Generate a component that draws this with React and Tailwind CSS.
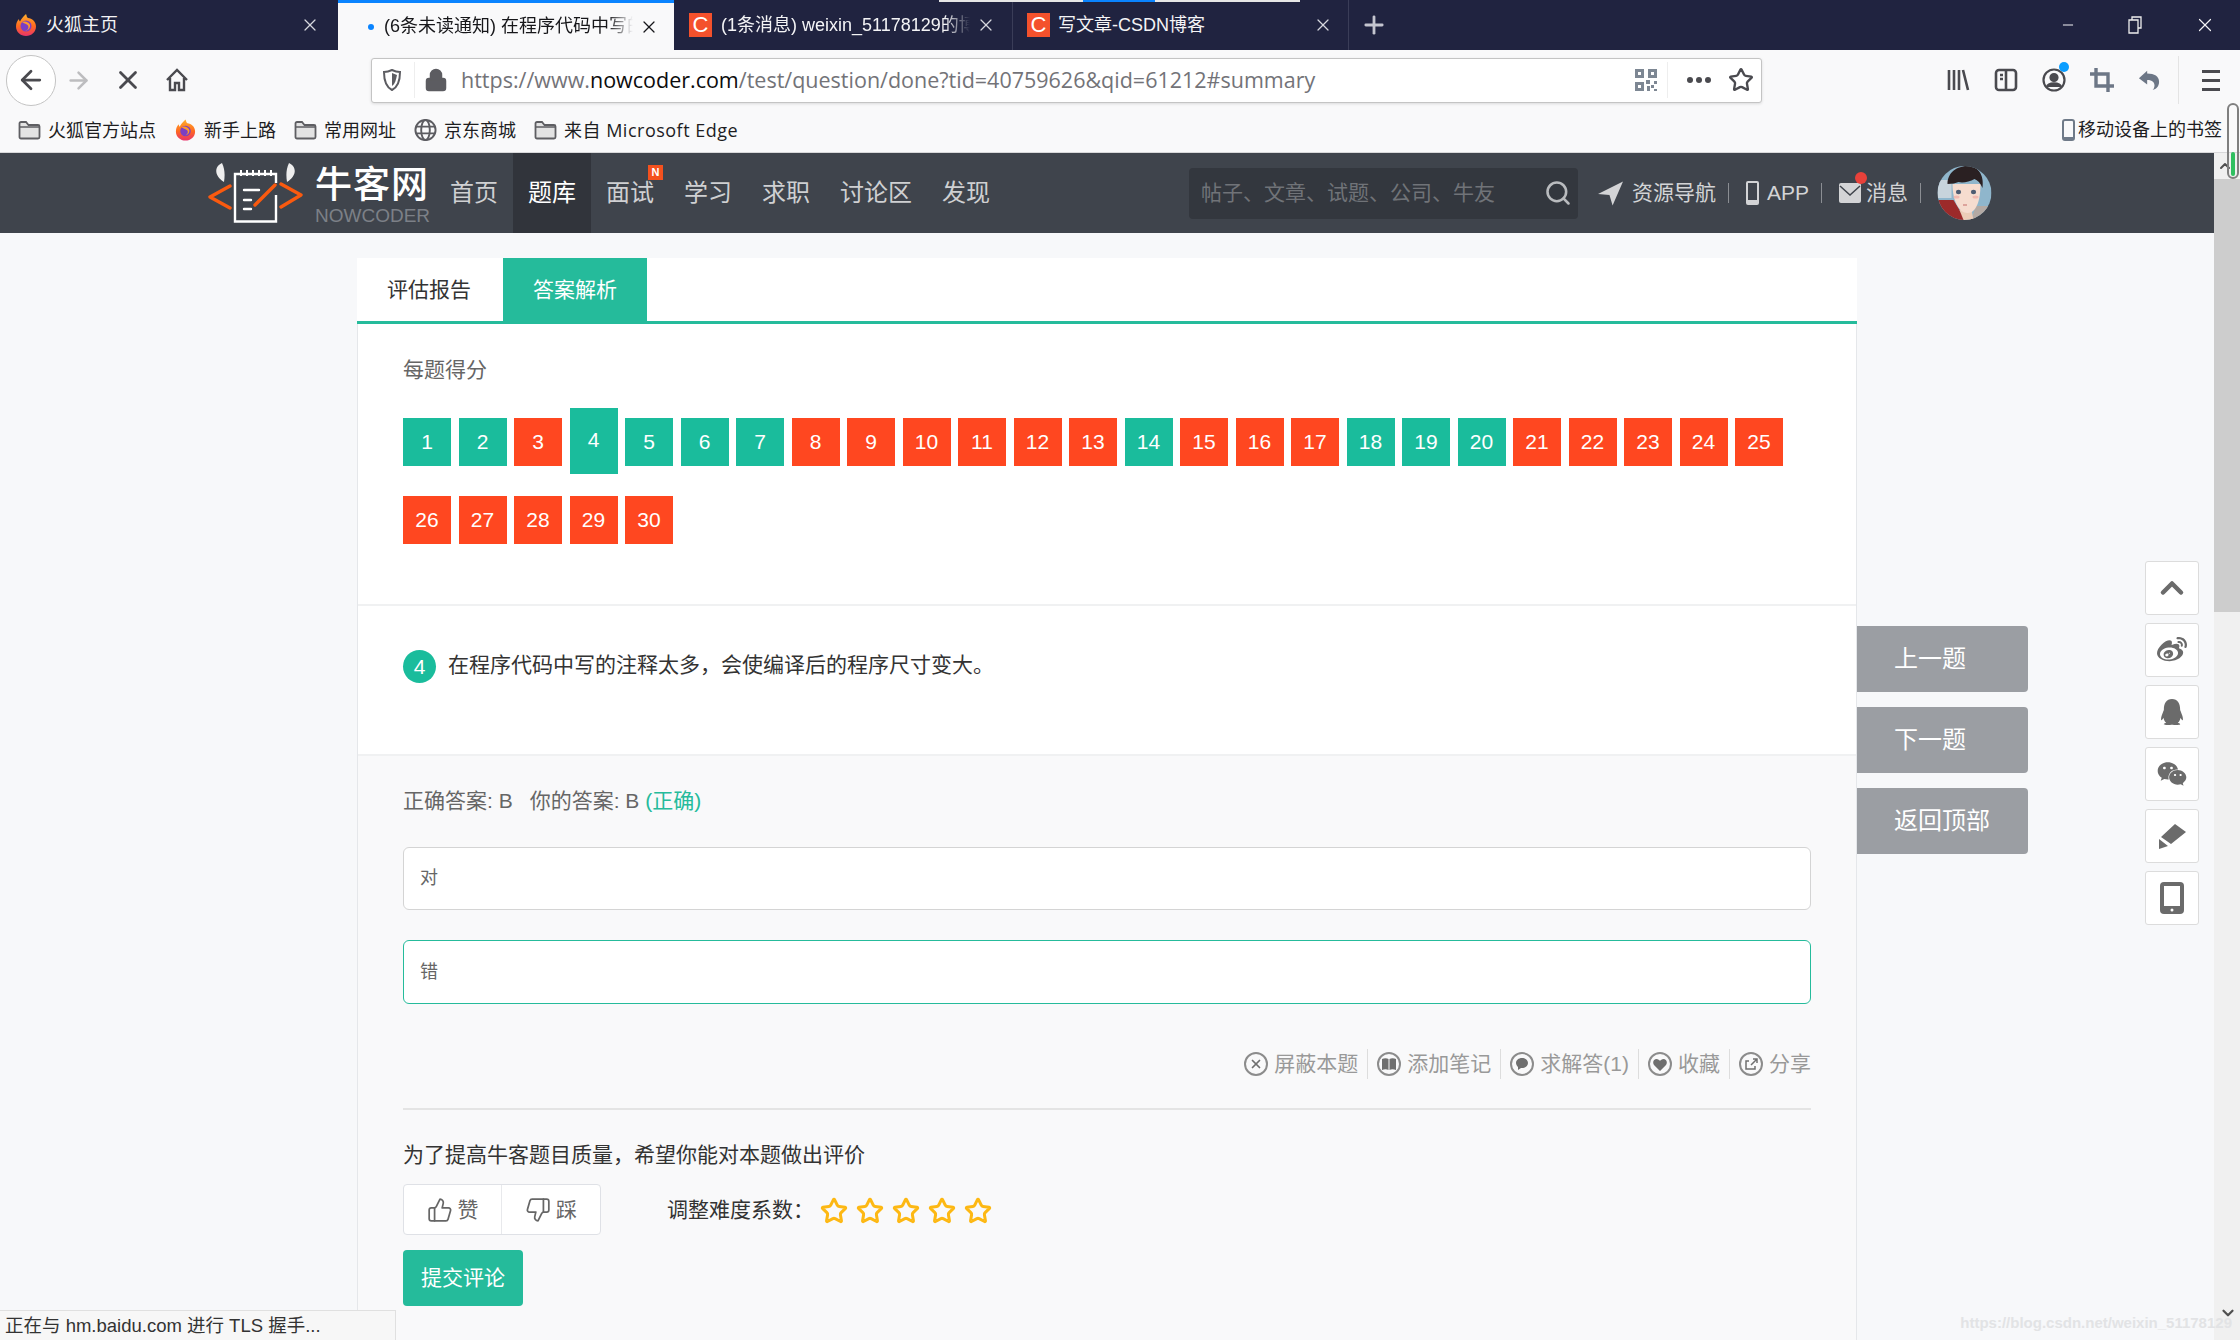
import { ArrowLeft, ArrowRight, X, Plus, Minus, Lock, Star, Search, ChevronUp, ChevronDown, ThumbsUp, ThumbsDown } from 'lucide-react';
import { FaWeibo, FaQq, FaWeixin } from 'react-icons/fa';

const wrong = [3, 8, 9, 10, 11, 12, 13, 15, 16, 17, 21, 22, 23, 24, 25, 26, 27, 28, 29, 30];
const scores = Array.from({ length: 30 }, (_, i) => i + 1);

function FirefoxIcon({ className }) {
  return (
    <svg viewBox="0 0 24 24" className={className}>
      <defs>
        <linearGradient id="ffx" x1="0" y1="0" x2="0" y2="1">
          <stop offset="0" stopColor="#ffb02e" />
          <stop offset="0.55" stopColor="#ff6a1f" />
          <stop offset="1" stopColor="#e8336b" />
        </linearGradient>
      </defs>
      <path d="M12 1c1 2 .5 3 2 4 4 .5 8 3.500 8 8.500C22 19 17.500 23 12 23S2 19 2 13.500C2 10 3.500 7.500 5 6c0 1 .5 2 1 2.500C7 6 9 4 12 1z" fill="url(#ffx)" />
      <circle cx="12" cy="13" r="5.500" fill="#7b3fc4" />
      <path d="M8 9c3-1.500 7 0 8 3 .5 3-2 6-5 5.500 3 0 4-3 3-5-1-1.500-4-2-6-3.500z" fill="#ff9a2a" />
    </svg>
  );
}

function CsdnIcon() {
  return (
    <span className="flex h-[24px] w-[23px] shrink-0 items-center justify-center bg-[#f4512c] text-[22px] leading-none text-white">C</span>
  );
}

function Folder() {
  return (
    <svg viewBox="0 0 23 24" className="h-[24px] w-[23px] shrink-0">
      <path d="M1.500 5.500c0-1 .6-1.500 1.500-1.500h5l2.500 3H20c1 0 1.500.6 1.500 1.500V19c0 1-.5 1.500-1.500 1.500H3c-.9 0-1.500-.5-1.500-1.500z" fill="#e3e3e3" stroke="#5e5e62" strokeWidth="1.800" />
      <path d="M2 9h19" stroke="#5e5e62" strokeWidth="1.500" />
    </svg>
  );
}

function Bookmark({ icon, label, className = '' }) {
  return (
    <div className="flex items-center gap-[7px]">
      {icon}
      <span className={`text-[18px] leading-[24px] text-[#1d1d1f] [font-family:'Open_Sans','Noto_Sans_CJK_SC',sans-serif] ${className}`}>{label}</span>
    </div>
  );
}

function ActionItem({ icon, label, last }) {
  return (
    <div className={`flex items-center gap-[6px] ${last ? '' : 'mr-[9px] border-r border-[#dddddd] pr-[9px]'}`}>
      <span className="flex h-[24px] w-[24px] items-center justify-center rounded-full border-2 border-[#8c8c8c] text-[#6f6f6f]">{icon}</span>
      <span className="text-[21px] leading-[30px] text-[#999999]">{label}</span>
    </div>
  );
}

function Logo() {
  return (
    <svg viewBox="0 0 96 60" className="h-[60px] w-[96px] shrink-0" fill="none">
      <path d="M15 0C8 3 6 12 17 19 18 13 18 6 15 0zM82 0c7 3 9 12-2 19-1-6-1-13 2-19z" fill="#eeeeee" />
      <path d="M69 32v26.500H28V11h41v9" stroke="#ffffff" strokeWidth="2.400" />
      <path d="M34 7v6M40 7v6M46 7v6M52 7v6M58 7v6M64 7v6" stroke="#ffffff" strokeWidth="2" />
      <path d="M37 27h15M37 37h7M37 46h7" stroke="#ffffff" strokeWidth="2.400" strokeLinecap="round" />
      <path d="M23 23 3 34l20 11M74 21l20 11-20 12M68 22 48 42" stroke="#fa5a0f" strokeWidth="3.400" strokeLinecap="round" strokeLinejoin="round" />
    </svg>
  );
}

function Avatar() {
  return (
    <svg viewBox="0 0 54 54" className="h-[54px] w-[55px]">
      <defs>
        <clipPath id="av"><circle cx="27" cy="27" r="27" /></clipPath>
      </defs>
      <g clipPath="url(#av)">
        <rect width="54" height="54" fill="#8fb6cc" />
        <rect y="14" width="14" height="18" fill="#c8d4dc" />
        <path d="M38 40h16v14H34z" fill="#b4aaa4" />
        <path d="M0 34h16l12 20H0z" fill="#9c2a2a" />
        <path d="M22 44h12l2 10H26z" fill="#eccdb8" />
        <path d="M15 18c0 16 6 29 15 29s13-13 13-29z" fill="#f6dccf" />
        <path d="M10 18C10 6 20 0 30 0c10 0 17 8 15 22-2-5-5-8-8-9-5 3-12 4-16 3-3 1-6 2-11 2z" fill="#2a2022" />
        <ellipse cx="21" cy="26" rx="2.600" ry="2.200" fill="#4e5c72" />
        <ellipse cx="36" cy="26" rx="2.600" ry="2.200" fill="#4e5c72" />
        <ellipse cx="19" cy="31" rx="3" ry="1.500" fill="#f2b9b0" />
        <ellipse cx="38" cy="31" rx="3" ry="1.500" fill="#f2b9b0" />
        <path d="M25.500 39h4" stroke="#c46a6a" strokeWidth="1.200" />
      </g>
    </svg>
  );
}

export default function App() {
  return (
    <div className="relative flex h-[1340px] w-[2240px] flex-col overflow-hidden bg-[#f7f8fa] [font-family:'Liberation_Sans','Noto_Sans_CJK_SC',sans-serif]">
      {/* tab strip */}
      <div className="relative flex h-[50px] shrink-0 items-stretch bg-[#202340] text-[#f4f4f6]">
        <div className="flex w-[338px] items-center pl-[14px] pr-[18px]">
          <FirefoxIcon className="h-[26px] w-[24px] shrink-0" />
          <span className="ml-[8px] flex-1 text-[18px]">火狐主页</span>
          <X size={20} strokeWidth={1.500} className="text-[#d6d7de]" />
        </div>
        <div className="flex w-[336px] items-center border-t-[3px] border-[#0a84ff] bg-[#f9f9fa] pl-[30px] pr-[15px] text-[#17171a]">
          <span className="h-[6px] w-[6px] shrink-0 rounded-full bg-[#0a84ff]" />
          <span className="ml-[10px] flex-1 overflow-hidden whitespace-nowrap text-[18px] [mask-image:linear-gradient(to_right,black_90%,transparent)]">(6条未读通知) 在程序代码中写的注释太多</span>
          <X size={20} strokeWidth={1.500} className="ml-[6px] shrink-0" />
        </div>
        <div className="flex w-[338px] items-center pl-[15px] pr-[16px]">
          <CsdnIcon />
          <span className="ml-[9px] flex-1 overflow-hidden whitespace-nowrap text-[18px] [mask-image:linear-gradient(to_right,black_90%,transparent)]">(1条消息) weixin_51178129的博客</span>
          <X size={20} strokeWidth={1.500} className="ml-[6px] shrink-0 text-[#d6d7de]" />
        </div>
        <div className="flex w-[337px] items-center border-x border-[#3a3d58] pl-[14px] pr-[15px]">
          <CsdnIcon />
          <span className="ml-[8px] flex-1 text-[18px]">写文章-CSDN博客</span>
          <X size={20} strokeWidth={1.500} className="text-[#d6d7de]" />
        </div>
        <div className="flex items-center pl-[11px]">
          <Plus size={28} strokeWidth={2.400} className="text-[#c4c5cf]" />
        </div>
        <div className="ml-auto flex items-center gap-[52px] pr-[24px]">
          <Minus size={16} strokeWidth={1.500} />
          <svg viewBox="0 0 14 18" className="h-[18px] w-[14px]" fill="none" stroke="#eeeeee" strokeWidth="1.300"><path d="M4 4V1h9v11h-3M1 4h9v13H1z" /></svg>
          <X size={22} strokeWidth={1.300} />
        </div>
        <div className="absolute left-[939px] top-0 h-[2px] w-[361px] bg-[#e6e6e6]">
          <div className="ml-[144px] h-[2px] w-[72px] bg-[#0a84ff]" />
        </div>
      </div>

      {/* toolbar */}
      <div className="flex h-[60px] shrink-0 items-center bg-[#f9f9fa] text-[#4a4a4f]">
        <div className="ml-[6px] flex h-[51px] w-[50px] shrink-0 items-center justify-center rounded-full border border-[#c4c4c4] bg-white">
          <ArrowLeft size={30} strokeWidth={2.200} />
        </div>
        <ArrowRight size={27} strokeWidth={2.200} className="ml-[9px] shrink-0 text-[#bdbdbf]" />
        <X size={30} strokeWidth={2.200} className="ml-[21px] shrink-0" />
        <svg viewBox="0 0 24 24" className="ml-[22px] h-[26px] w-[24px] shrink-0" fill="none" stroke="#4a4a4f" strokeWidth="2.400">
          <path d="M2 12 12 2l10 10M5 10v12h5v-7h4v7h5V10" />
        </svg>
        <div className="ml-[182px] flex h-[45px] w-[1391px] shrink-0 items-center rounded-[3px] border border-[#c4c4c4] bg-white shadow-[0_1px_3px_rgba(0,0,0,0.12)]">
          <svg viewBox="0 0 20 24" className="ml-[10px] h-[24px] w-[20px] shrink-0" fill="none" stroke="#5c5c61" strokeWidth="2">
            <path d="M2 4c3 0 6-1 8-2 2 1 5 2 8 2 0 9-2 15-8 18C4 19 2 13 2 4z" />
            <path d="M10 5v13c3-2 4-6 5-11z" fill="#5c5c61" stroke="none" />
          </svg>
          <div className="ml-[12px] h-[36px] w-px bg-[#eeeeee]" />
          <Lock size={24} strokeWidth={2.500} fill="#5c5c61" className="ml-[9px] shrink-0 text-[#5c5c61]" />
          <div className="ml-[13px] flex-1 whitespace-nowrap text-[21.500px] text-[#737378] [font-family:'Open_Sans','Noto_Sans_CJK_SC',sans-serif]">
            https://www.<span className="text-[#0c0c0d]">nowcoder.com</span>/test/question/done?tid=40759626&amp;qid=61212#summary
          </div>
          <svg viewBox="0 0 24 24" className="h-[26px] w-[24px] shrink-0" fill="#7d8793">
            <path d="M1 1h9v9H1zm3 3v3h3V4zM14 1h9v9h-9zm3 3v3h3V4zM1 14h9v9H1zm3 3v3h3v-3zM12 12h4v4h-4zM17 17h3v3h-3zM20 13h3v3h-3zM13 18h3v5h-3zM20 21h3v2h-3z" />
          </svg>
          <div className="ml-[9px] h-[36px] w-px bg-[#eeeeee]" />
          <div className="ml-[19px] flex gap-[3px]">
            <span className="h-[6px] w-[6px] rounded-full bg-[#4a4a4f]" />
            <span className="h-[6px] w-[6px] rounded-full bg-[#4a4a4f]" />
            <span className="h-[6px] w-[6px] rounded-full bg-[#4a4a4f]" />
          </div>
          <Star size={26} strokeWidth={2.200} className="ml-[17px] mr-[7px] shrink-0" />
        </div>
        <svg viewBox="0 0 24 24" className="ml-[184px] h-[24px] w-[24px] shrink-0" fill="none" stroke="#4a4a4f" strokeWidth="2.600">
          <path d="M3 2v20M8 2v20M13 2v20M17 2l5 20" />
        </svg>
        <svg viewBox="0 0 24 24" className="ml-[24px] h-[24px] w-[24px] shrink-0" fill="none" stroke="#4a4a4f" strokeWidth="2.600">
          <rect x="2" y="2" width="20" height="20" rx="3" />
          <path d="M12 2v20M6 7h3M6 11h3" />
        </svg>
        <div className="relative ml-[24px] shrink-0">
          <svg viewBox="0 0 24 24" className="h-[24px] w-[24px]" fill="none" stroke="#4a4a4f" strokeWidth="2.200">
            <circle cx="12" cy="12" r="10.500" />
            <circle cx="12" cy="9.500" r="3.500" fill="#4a4a4f" />
            <path d="M5 19c1-5 13-5 14 0" fill="#4a4a4f" />
          </svg>
          <span className="absolute -right-[3px] -top-[6px] h-[10px] w-[10px] rounded-full bg-[#0a9dff]" />
        </div>
        <svg viewBox="0 0 24 24" className="ml-[24px] h-[24px] w-[24px] shrink-0" fill="none" stroke="#6d7786" strokeWidth="3.400">
          <path d="M6 0v18h18M0 6h18v18" />
        </svg>
        <svg viewBox="0 0 24 24" className="ml-[24px] h-[26px] w-[22px] shrink-0" fill="#6d7786">
          <path d="M10 2 1 10l9 7v-5c6 0 8 3 8 6 0 2-1 4-2 5 4-1 7-4 7-9 0-6-5-9-13-9z" />
        </svg>
        <div className="ml-[18px] h-[48px] w-px bg-[#e4e4e4]" />
        <div className="ml-[23px] flex w-[18px] flex-col gap-[6px]">
          <span className="h-[3px] bg-[#4a4a4f]" />
          <span className="h-[3px] bg-[#4a4a4f]" />
          <span className="h-[3px] bg-[#4a4a4f]" />
        </div>
      </div>

      {/* bookmarks */}
      <div className="flex h-[43px] shrink-0 items-center gap-[18px] border-b border-[#d8d8da] bg-[#f9f9fa] pb-[3px] pl-[18px] pr-[18px]">
        <Bookmark icon={<Folder />} label="火狐官方站点" />
        <Bookmark icon={<FirefoxIcon className="h-[26px] w-[23px] shrink-0" />} label="新手上路" />
        <Bookmark icon={<Folder />} label="常用网址" />
        <Bookmark
          icon={
            <svg viewBox="0 0 24 24" className="h-[24px] w-[23px] shrink-0" fill="none" stroke="#5c5c61" strokeWidth="2">
              <circle cx="12" cy="12" r="10.500" />
              <ellipse cx="12" cy="12" rx="4.500" ry="10.500" />
              <path d="M2 8.500h20M2 15.500h20" />
            </svg>
          }
          label="京东商城"
        />
        <Bookmark icon={<Folder />} label="来自 Microsoft Edge" className="tracking-[0.5px]" />
        <div className="ml-auto flex items-center gap-[3px]">
          <span className="h-[22px] w-[13px] rounded-[3px] border-2 border-b-4 border-[#6f7a88]" />
          <span className="text-[18px] leading-[24px] text-[#1d1d1f]">移动设备上的书签</span>
        </div>
      </div>

      {/* page */}
      <div className="flex min-h-0 flex-1">
        <div className="min-w-0 flex-1">
          <header className="flex h-[80px] items-center bg-[#3f444c] pl-[207px]">
            <Logo />
            <div className="ml-[12px] mt-[8px] w-[114px] shrink-0">
              <div className="text-[37px] font-medium leading-[38px] tracking-[1px] text-white">牛客网</div>
              <div className="text-[19px] leading-[22px] text-[#7c8087]">NOWCODER</div>
            </div>
            <nav className="ml-[6px] flex h-full items-stretch text-[24px] text-[#cfd0d2]">
              <a className="flex w-[78px] items-center justify-center">首页</a>
              <a className="flex w-[78px] items-center justify-center bg-[#31343b] text-white">题库</a>
              <a className="relative flex w-[78px] items-center justify-center">
                面试
                <span className="absolute left-[57px] top-[12px] flex h-[15px] w-[15px] items-center justify-center bg-[#f4511e] text-[11px] font-bold leading-none text-white">N</span>
              </a>
              <a className="flex w-[78px] items-center justify-center">学习</a>
              <a className="flex w-[78px] items-center justify-center">求职</a>
              <a className="flex w-[102px] items-center justify-center">讨论区</a>
              <a className="flex w-[78px] items-center justify-center">发现</a>
            </nav>
            <div className="ml-[184px] flex h-[51px] w-[389px] items-center justify-between rounded-[4px] bg-[#33373e] pl-[12px] pr-[6px]">
              <span className="text-[21px] text-[#707378]">帖子、文章、试题、公司、牛友</span>
              <Search size={28} strokeWidth={2.200} className="text-[#b9bbbe]" />
            </div>
            <svg viewBox="0 0 24 24" className="ml-[20px] h-[30px] w-[25px] shrink-0" fill="#d3d4d6">
              <path d="M24 1 0 13l11 1 3 10z" />
            </svg>
            <span className="ml-[9px] text-[21px] text-[#d3d4d6]">资源导航</span>
            <span className="ml-[12px] h-[20px] w-px bg-[#8b8e93]" />
            <span className="ml-[17px] h-[24px] w-[13px] rounded-[2px] border-2 border-b-[5px] border-[#d3d4d6]" />
            <span className="ml-[8px] text-[21px] text-[#d3d4d6]">APP</span>
            <span className="ml-[12px] h-[20px] w-px bg-[#8b8e93]" />
            <span className="relative ml-[17px] flex h-[20px] w-[22px] items-center justify-center rounded-[2px] bg-[#d3d4d6]">
              <svg viewBox="0 0 22 20" className="h-[20px] w-[22px]" fill="none" stroke="#3f444c" strokeWidth="1.500"><path d="m1 3 10 9 10-9" /></svg>
              <span className="absolute -right-[6px] -top-[11px] h-[12px] w-[12px] rounded-full bg-[#e8413a]" />
            </span>
            <span className="ml-[5px] text-[21px] text-[#d3d4d6]">消息</span>
            <span className="ml-[12px] h-[20px] w-px bg-[#8b8e93]" />
            <span className="ml-[16px] shrink-0"><Avatar /></span>
          </header>

          <main className="ml-[357px] mt-[25px] w-[1500px] text-[21px]">
            <div className="flex h-[66px] border-b-[3px] border-[#25bb9b] bg-white">
              <div className="flex w-[146px] items-center justify-center pr-[2px] text-[#333333]">评估报告</div>
              <div className="flex w-[144px] items-center justify-center bg-[#25bb9b] text-white">答案解析</div>
            </div>
            <div className="border-x border-[#e5e7ea] bg-white">
              <div className="h-[282px] border-b-2 border-[#f0f1f2] px-[45px] pt-[31px]">
                <div className="leading-[30px] text-[#666666]">每题得分</div>
                <div className="mt-[33px] flex flex-wrap items-start gap-x-[7.500px] gap-y-[30px]">
                  {scores.map((n) => (
                    <div
                      key={n}
                      className={`flex w-[48px] items-center justify-center text-white ${wrong.includes(n) ? 'bg-[#ff4720]' : 'bg-[#1abc9c]'} ${n === 4 ? '-mb-[8px] -mt-[10px] h-[66px] pb-[3px]' : 'h-[48px]'}`}
                    >
                      {n}
                    </div>
                  ))}
                </div>
              </div>
              <div className="flex h-[150px] items-start border-b-2 border-[#f0f1f2] pl-[45px] pt-[44px]">
                <span className="flex h-[33px] w-[33px] items-center justify-center rounded-full bg-[#1abc9c] text-white">4</span>
                <span className="ml-[12px] leading-[30px] text-[#333333]">在程序代码中写的注释太多，会使编译后的程序尺寸变大。</span>
              </div>
              <div className="h-[600px] bg-[#f9f9fa] px-[45px] pt-[30px]">
                <div className="flex gap-[17px] leading-[30px] text-[#666666]">
                  <span>正确答案: B</span>
                  <span>你的答案: B <span className="text-[#25bb9b]">(正确)</span></span>
                </div>
                <div className="mt-[31px] flex h-[63px] items-center rounded-[6px] border border-[#d4d4d4] bg-white pl-[16px] text-[18px] text-[#666666]">对</div>
                <div className="mt-[30px] flex h-[64px] items-center rounded-[6px] border border-[#25bb9b] bg-white pl-[16px] text-[18px] text-[#666666]">错</div>
                <div className="mt-[44px] flex h-[32px] items-center justify-end">
                  <ActionItem label="屏蔽本题" icon={<X size={14} strokeWidth={3} />} />
                  <ActionItem label="添加笔记" icon={<svg viewBox="0 0 14 12" className="h-[12px] w-[14px]" fill="currentColor"><path d="M0 1c2-1 5-1 6.500 0v11C5 11 2 11 0 12zM14 1c-2-1-5-1-6.500 0v11c1.500-1 4.500-1 6.500 0z" /></svg>} />
                  <ActionItem label="求解答(1)" icon={<svg viewBox="0 0 14 14" className="h-[14px] w-[14px]" fill="currentColor"><path d="M7 1c3.500 0 6 2.300 6 5s-2.500 5-6 5l-1-.1L3 13v-3C2 9 1 7.500 1 6c0-2.700 2.500-5 6-5z" /></svg>} />
                  <ActionItem label="收藏" icon={<svg viewBox="0 0 14 13" className="h-[13px] w-[14px]" fill="currentColor"><path d="M7 13 1 7C-1 4 1 1 3.500 1 5 1 6.500 2 7 3c.5-1 2-2 3.500-2C13 1 15 4 13 7z" /></svg>} />
                  <ActionItem last label="分享" icon={<svg viewBox="0 0 14 14" className="h-[14px] w-[14px]" fill="none" stroke="currentColor" strokeWidth="1.500"><path d="M9 2h4v4M13 2 7 8M11 9v3H2V4h3" /></svg>} />
                </div>
                <div className="mt-[28px] border-t-2 border-[#e4e4e4] pt-[30px] leading-[30px] text-[#333333]">为了提高牛客题目质量，希望你能对本题做出评价</div>
                <div className="mt-[14px] flex items-center">
                  <div className="flex h-[51px] w-[198px] rounded-[4px] border border-[#dfe1e6] bg-white text-[#666666]">
                    <div className="flex w-[98px] items-center justify-center gap-[5px] border-r border-[#e8e9ec]">
                      <ThumbsUp size={26} strokeWidth={1.600} />
                      <span>赞</span>
                    </div>
                    <div className="flex flex-1 items-center justify-center gap-[5px]">
                      <ThumbsDown size={26} strokeWidth={1.600} />
                      <span>踩</span>
                    </div>
                  </div>
                  <span className="ml-[66px] text-[#333333]">调整难度系数：</span>
                  <div className="ml-[6px] mt-[3px] flex gap-[8px]">
                    {[0, 1, 2, 3, 4].map((i) => (
                      <Star key={i} size={28} strokeWidth={2.600} className="text-[#fdb813]" />
                    ))}
                  </div>
                </div>
                <button className="mt-[15px] h-[56px] w-[120px] rounded-[4px] bg-[#25bb9b] text-white">提交评论</button>
              </div>
            </div>
          </main>
        </div>

        {/* scrollbar */}
        <div className="flex w-[26px] shrink-0 flex-col bg-[#f0f0f0]">
          <div className="flex h-[26px] items-center pl-[3px] text-[#505050]"><ChevronUp size={16} strokeWidth={3} /></div>
          <div className="h-[433px] bg-[#cdcdcd]" />
          <ChevronDown size={18} strokeWidth={3} className="ml-[5px] mt-[692px] text-[#505050]" />
        </div>
      </div>

      {/* capture marker over the scrollbar head */}
      <div className="absolute left-[2227px] top-[103px] h-[76px] w-[12px] rounded-full border-2 border-[#7f7f7f]">
        <div className="ml-[2px] mt-[47px] h-[24px] w-[4px] rounded-full bg-[#2fbf60]" />
      </div>

      {/* question pager, sits over the page */}
      <div className="absolute left-[1857px] top-[626px] flex w-[171px] flex-col gap-[15px]">
        {['上一题', '下一题', '返回顶部'].map((t) => (
          <div key={t} className="flex h-[66px] items-center rounded-r-[4px] bg-[#9b9ea3] pl-[37px] text-[24px] text-white">{t}</div>
        ))}
      </div>

      {/* share rail */}
      <div className="absolute left-[2145px] top-[561px] flex w-[54px] flex-col gap-[8px] text-[#6b6b6b]">
        <div className="flex h-[54px] items-center justify-center rounded-[3px] border border-[#dcdcdc] bg-white"><ChevronUp size={36} strokeWidth={3} /></div>
        <div className="flex h-[54px] items-center justify-center rounded-[3px] border border-[#dcdcdc] bg-white"><FaWeibo size={30} /></div>
        <div className="flex h-[54px] items-center justify-center rounded-[3px] border border-[#dcdcdc] bg-white"><FaQq size={26} /></div>
        <div className="flex h-[54px] items-center justify-center rounded-[3px] border border-[#dcdcdc] bg-white"><FaWeixin size={30} /></div>
        <div className="flex h-[54px] items-center justify-center rounded-[3px] border border-[#dcdcdc] bg-white">
          <svg viewBox="0 0 28 26" className="h-[26px] w-[28px]" fill="currentColor"><path d="M17 1 28 9 13 21l-10-7zM1 16l9 7-9 3z" /></svg>
        </div>
        <div className="flex h-[54px] items-center justify-center rounded-[3px] border border-[#dcdcdc] bg-white">
          <svg viewBox="0 0 24 32" className="h-[32px] w-[24px]"><rect x="0" y="0" width="24" height="32" rx="4" fill="currentColor" /><rect x="4" y="4" width="16" height="20" fill="#ffffff" /><circle cx="12" cy="28" r="1.500" fill="#ffffff" /></svg>
        </div>
      </div>

      {/* status panel and watermark */}
      <div className="absolute bottom-0 left-0 flex h-[30px] w-[396px] items-center border-r border-t border-[#e0e0e0] bg-[#f7f7f7] pl-[5px] text-[18.500px] text-[#333333]">正在与 hm.baidu.com 进行 TLS 握手...</div>
      <div className="absolute right-[8px] top-[1312px] text-[15px] font-bold text-[#e2e3e5]">https://blog.csdn.net/weixin_51178129</div>
    </div>
  );
}
